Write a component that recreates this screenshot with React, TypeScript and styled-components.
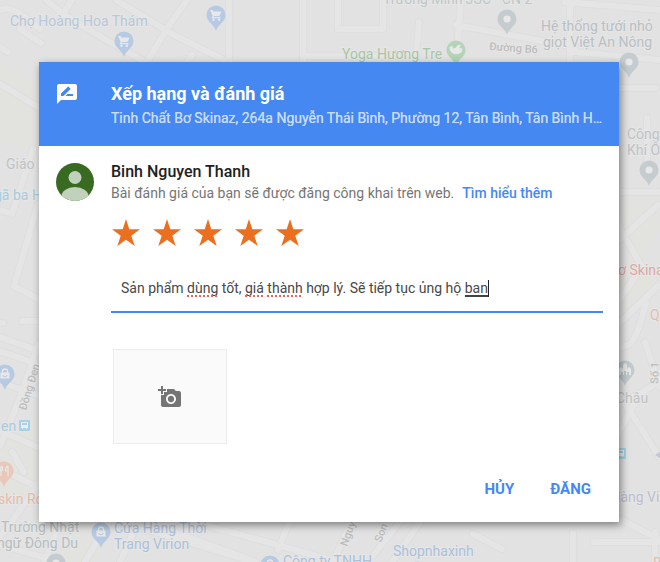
import React, { useState } from "react";
import styled, { createGlobalStyle, css } from "styled-components";

const GlobalStyle = createGlobalStyle`
  * { box-sizing: border-box; }
  html, body { margin: 0; background: #e2e2e2; overflow: hidden; }
  body, button, input, textarea { font-family: Roboto, "Liberation Sans", sans-serif; }
`;

const Page = styled.div`
  position: relative;
  min-height: 100vh;
  padding: 62px 41px 40px 39px;
`;

const MapCanvas = styled.svg`
  position: absolute;
  inset: 0;
  width: 100%;
  height: 100%;
  font-family: Roboto, "Liberation Sans", sans-serif;
  font-size: 14px;
`;

const Dialog = styled.section`
  position: relative;
  background: #fff;
  box-shadow: 2px 3px 8px rgba(0, 0, 0, 0.45);
`;

const gridRow = css`
  display: grid;
  grid-template-columns: 40px minmax(0, 1fr);
  column-gap: 16px;
  padding-left: 16px;
  padding-right: 16px;
`;

const Header = styled.header`
  ${gridRow}
  height: 84px;
  padding-top: 20px;
  background: #4688f1;
  color: #fff;
`;

const Title = styled.h1`
  margin: 0;
  font-size: 18px;
  line-height: 24px;
  font-weight: 700;
`;

const Place = styled.p`
  margin: 0;
  overflow: hidden;
  color: #c7dbfb;
  font-size: 14px;
  line-height: 24px;
  font-weight: 400;
  text-shadow: 0 0 currentColor;
  white-space: nowrap;
  text-overflow: ellipsis;
`;

const Body = styled.form`
  ${gridRow}
  padding-top: 16px;
`;

const Content = styled.div`
  min-width: 0;
`;

const UserName = styled.h2`
  margin: 0;
  color: #212121;
  font-size: 16px;
  line-height: 20px;
  font-weight: 500;
`;

const Notice = styled.p`
  margin: 0;
  color: #757575;
  font-size: 14px;
  line-height: 22px;
`;

const Link = styled.a`
  margin-left: 8px;
  color: #4688f1;
  font-weight: 500;
  text-decoration: none;
`;

const Stars = styled.div`
  display: flex;
  gap: 11px;
  height: 48px;
  padding-top: 14px;
`;

const StarButton = styled.button<{ $on: boolean }>`
  width: 30px;
  height: 30px;
  padding: 0;
  border: 0;
  background: none;
  color: ${(p) => (p.$on ? "#ec6f20" : "#dadce0")};
  svg { display: block; }
`;

const Field = styled.div`
  position: relative;
  height: 61px;
  border-bottom: 2px solid #4688f1;
`;

const fieldText = css`
  padding: 26px 10px 0;
  font-size: 14px;
  line-height: 20px;
`;

const ReviewInput = styled.textarea`
  ${fieldText}
  display: block;
  width: 100%;
  height: 59px;
  border: 0;
  outline: 0;
  resize: none;
  background: none;
  color: #484848;
  caret-color: transparent;
`;

const Marks = styled.div`
  ${fieldText}
  position: absolute;
  inset: 0;
  color: transparent;
  white-space: pre-wrap;
  pointer-events: none;
`;

const Misspelt = styled.span`
  text-decoration: underline dotted #ef5f5a 2px;
  text-decoration-skip-ink: none;
  text-underline-offset: 2px;
`;

const Composing = styled.span`
  padding-bottom: 1px;
  border-right: 1px solid #212121;
  text-decoration: underline #424242 2px;
  text-underline-offset: 2px;
`;

const PhotoButton = styled.button`
  display: flex;
  align-items: center;
  justify-content: center;
  width: 114px;
  height: 95px;
  margin: 36px 2px 0;
  padding: 0;
  border: 1px solid #ececec;
  background: #fafafa;
  color: #757575;
`;

const Actions = styled.footer`
  grid-column: 1 / -1;
  display: flex;
  justify-content: flex-end;
  gap: 20px;
  padding: 27px 4px 15px;
`;

const TextButton = styled.button`
  height: 36px;
  padding: 0 8px;
  border: 0;
  background: none;
  color: #4688f1;
  font-size: 15px;
  font-weight: 700;
`;

type PinKind = "cart" | "dot" | "bag" | "food" | "city" | "spa";

const pins: { x: number; y: number; kind: PinKind; color: string }[] = [
  { x: 216, y: 15, kind: "cart", color: "#b7cae3" },
  { x: 124, y: 41, kind: "cart", color: "#b7cae3" },
  { x: 507, y: 19, kind: "dot", color: "#c4ccd0" },
  { x: 456, y: 50, kind: "spa", color: "#b4d4b6" },
  { x: 629, y: 62, kind: "dot", color: "#c4ccd0" },
  { x: 649, y: 170, kind: "dot", color: "#c4ccd0" },
  { x: 5, y: 374, kind: "bag", color: "#b7cae3" },
  { x: 4, y: 471, kind: "food", color: "#e9c8b9" },
  { x: 101, y: 532, kind: "bag", color: "#b7cae3" },
  { x: 56, y: 563, kind: "dot", color: "#c4ccd0" },
  { x: 270, y: 565, kind: "bag", color: "#b7cae3" },
  { x: 625, y: 370, kind: "city", color: "#c1cace" },
  { x: 417, y: 571, kind: "bag", color: "#b7cae3" },
];

function PinGlyph({ kind }: { kind: PinKind }) {
  const ink = "#e8e8e8";
  switch (kind) {
    case "cart":
      return (
        <g fill={ink}>
          <path d="M-6-5h2.600l.7 1.500h8.200L3.500 1h-5.500l-.5 1h7v1.300h-9l1.200-2.500z" />
          <circle cx="-2.500" cy="4.800" r="1.200" />
          <circle cx="3" cy="4.800" r="1.200" />
        </g>
      );
    case "bag":
      return (
        <g>
          <path d="M-4.500-1.500h9v6h-9z" fill={ink} />
          <path d="M-2.500-1v-1.500a2.500 2.500 0 0 1 5 0V-1" fill="none" stroke={ink} strokeWidth="1.300" />
          <path d="M-2 1a2 1.800 0 0 0 4 0" fill="none" stroke="#b7cae3" />
        </g>
      );
    case "food":
      return (
        <path
          d="M-4.500-5v3.500q0 1.500 1.500 1.500v5M-3-5v5M-1.500-5v3.500q0 1.500-1.500 1.500M4-5v10M4-5Q1.500-4 1.500 0H4"
          fill="none"
          stroke={ink}
          strokeWidth="1.200"
        />
      );
    case "city":
      return <path d="M-6 5v-6l2-2 2 2v-4l2-2 2 2v4l2-2 2 2v6h-2V2H2v3h-1V1h-2v4h-1V2h-2v3z" fill={ink} />;
    case "spa":
      return (
        <path
          d="M-6.500-2.500a2 2 0 0 1 3-1q1 1 0 2Q0-1.500 1.500-4.500q1.500-1 4-.5-2 1-2 3l3 .5q0 4-3 5-5 2-8-1-2.500-2-2-5z"
          fill={ink}
        />
      );
    default:
      return <circle r="3.600" fill={ink} />;
  }
}

const roads = [
  "M-5 13q12-10 28 3l17 13M-4 45l12 7M20 29l21 14M72 0L63 14l45 27 60 34M46 0l28 23M116 0l58 35 56 28M187 0l-19 27-23 38M229 0v66M192 55l-8 12M303 0v65M305 56h92",
  "M338 0v29h45V0M419 22l-4 43M456 25l119 22M461 0l-4 50M570 0v65M565 2l95 8M575 52l85 8",
  "M0 84l38 23M33 149L12 214-5 209M38 204l-24 82 28 15M0 323h3M22 321h20M0 337l42 15",
  "M0 351l40 14M0 382l40 14M39 343L19 400 0 446M0 431l40 17M0 469l42 20M12 452l12 20M42 480L0 537M60 522l-16 42M0 545l60 17",
  "M85 562l28-48 78 24 65 24M120 562l20-44M132 525l122 37M188 520l150 42M290 520l-12 30M333 562l20-44M368 562l38-48M425 515l-35 50M473 534l29 15M573 533v32M594 542h66M622 520l38 20",
  "M619 88h36M647 118v50M619 192h41M658 205l-41 37M618 225l24 42-24 35M660 284l-42 40M646 303q-10 40-18 42l-11 3M618 404q24-10 42-24M635 402l-18 34M626 405l34 53M645 342l15 45M655 532v30",
];

const blocks = [
  "M0 62l39 22v72L0 140z",
  "M619 196l41-8v40l-17 24-24-30z",
  "M0 451l39-37v82L0 506z",
  "M619 270l20-20 21 28-41 36z",
  "M68 531l27-9 14 18-16 22H58z",
];

const labels: { x: number; y: number; text: string; tone: string; turn?: number; small?: boolean }[] = [
  { x: 10, y: 26, text: "Chợ Hoàng Hoa Thám", tone: "#b7c6da" },
  { x: 383, y: 4, text: "Trường Minh JSC - CN 2", tone: "#bfc6c9" },
  { x: 541, y: 31, text: "Hệ thống tưới nhỏ", tone: "#b9c0c3" },
  { x: 543, y: 47, text: "giọt Việt An Nông", tone: "#b9c0c3" },
  { x: 342, y: 59, text: "Yoga Hương Tre", tone: "#a7c6a7" },
  { x: 489, y: 50, text: "Đường B6", tone: "#bdbdbd", turn: 4, small: true },
  { x: 6, y: 169, text: "Giáo X", tone: "#bfc3c5" },
  { x: -6, y: 200, text: "gã ba H", tone: "#a9cbdc" },
  { x: 627, y: 139, text: "Công", tone: "#bfc3c5" },
  { x: 627, y: 155, text: "Khí Ô", tone: "#bfc3c5" },
  { x: 618, y: 275, text: "ơ Skinaz", tone: "#dba8a6" },
  { x: 650, y: 320, text: "Qu", tone: "#e2bdaa" },
  { x: 616, y: 403, text: "Châu", tone: "#bfc3c5" },
  { x: 617, y: 502, text: "làng Việt", tone: "#bdbdd0" },
  { x: 653, y: 568, text: "Bá", tone: "#e2bdaa" },
  { x: 658, y: 384, text: "Số 1", tone: "#bdbdbd", turn: -88, small: true },
  { x: 26, y: 411, text: "Đồng Đen", tone: "#bdbdbd", turn: -73, small: true },
  { x: 1, y: 431, text: "en", tone: "#a9cbdc" },
  { x: -2, y: 504, text: "skin Rob", tone: "#e2bdaa" },
  { x: 1, y: 532, text: "Trường Nhật", tone: "#b5bdc0" },
  { x: -3, y: 548, text: "ngữ Đông Du", tone: "#b5bdc0" },
  { x: 114, y: 533, text: "Cửa Hàng Thời", tone: "#adc0da" },
  { x: 114, y: 549, text: "Trang Virion", tone: "#adc0da" },
  { x: 283, y: 566, text: "Công ty TNHH", tone: "#adc0da" },
  { x: 393, y: 556, text: "Shopnhaxinh", tone: "#adc0da" },
  { x: 347, y: 547, text: "Nguy", tone: "#bdbdbd", turn: -70, small: true },
  { x: 381, y: 543, text: "Son", tone: "#bdbdbd", turn: -68, small: true },
];

function MapBackdrop() {
  return (
    <MapCanvas viewBox="0 0 660 562" preserveAspectRatio="xMidYMid slice" aria-hidden="true">
      <rect width="660" height="562" fill="#e2e2e2" />
      {blocks.map((d) => <path key={d} d={d} fill="#e2e2df" />)}
      <g fill="none" strokeLinejoin="round" strokeLinecap="round">
        {roads.map((d) => <path key={d} d={d} stroke="#dedede" strokeWidth="8" />)}
        {roads.map((d) => <path key={d} d={d} stroke="#e5e5e5" strokeWidth="6" />)}
      </g>
      {pins.map((p) => (
        <g key={`${p.x}-${p.y}`} transform={`translate(${p.x} ${p.y})`}>
          <path d="M0 16C-2 9-9.500 7-9.500 0a9.500 9.500 0 1 1 19 0C9.500 7 2 9 0 16z" fill={p.color} />
          <PinGlyph kind={p.kind} />
        </g>
      ))}
      {[[19, 420], [615, 448]].map(([x, y]) => (
        <g key={x} transform={`translate(${x} ${y})`}>
          <rect width="11" height="11" rx="1" fill="#a5d3e5" />
          <path d="M2 2h7v6H2zM3 3v2h5V3zM3 8h1v1H3zM7 8h1v1H7z" fill="#e6eef0" fillRule="evenodd" />
        </g>
      ))}
      <path d="M655 455l6-4v8z" fill="#c6c6d4" />
      {labels.map((l) => (
        <text
          key={l.text}
          fill={l.tone}
          stroke="#e6e6e6"
          strokeWidth="2"
          paintOrder="stroke"
          fontSize={l.small ? 11 : 14}
          fontWeight={l.small ? 500 : 400}
          transform={`translate(${l.x} ${l.y}) rotate(${l.turn ?? 0})`}
        >
          {l.text}
        </text>
      ))}
    </MapCanvas>
  );
}

const RateIcon = () => (
  <svg width="24" height="24" viewBox="0 0 24 24" fill="currentColor" aria-hidden="true">
    <path d="M20 2H4c-1.100 0-1.990.9-1.990 2L2 22l4-4h14c1.100 0 2-.9 2-2V4c0-1.100-.9-2-2-2zM6 14v-2.470l6.880-6.880c.2-.2.510-.2.710 0l1.770 1.770c.2.200.2.510 0 .71L8.470 14H6zm12 0h-7.500l2-2H18v2z" />
  </svg>
);

const Avatar = () => (
  <svg width="40" height="40" viewBox="0 0 40 40" role="img" aria-label="Binh Nguyen Thanh">
    <defs>
      <clipPath id="avatar-clip"><circle cx="20" cy="20" r="19" /></clipPath>
    </defs>
    <circle cx="20" cy="20" r="19" fill="#386a21" />
    <g fill="#c2d1bb" clipPath="url(#avatar-clip)">
      <circle cx="20" cy="15.500" r="6.500" />
      <ellipse cx="20" cy="34" rx="13.500" ry="9" />
    </g>
  </svg>
);

const StarIcon = () => (
  <svg width="30" height="30" viewBox="0 0 30 30" fill="currentColor" aria-hidden="true">
    <path d="M15 1l3.300 10.200H29l-8.700 6.600L23.700 28 15 21.800 6.300 28l3.400-10.200L1 11.200h10.700z" />
  </svg>
);

const CameraIcon = () => (
  <svg width="24" height="24" viewBox="0 0 24 24" fill="currentColor" aria-hidden="true">
    <path d="M3 4V1h2v3h3v2H5v3H3V6H0V4h3zm3 6V7h3V4h7l1.830 2H21c1.100 0 2 .9 2 2v12c0 1.100-.9 2-2 2H5c-1.100 0-2-.9-2-2V10h3zm7 9c2.760 0 5-2.240 5-5s-2.240-5-5-5-5 2.240-5 5 2.240 5 5 5zm-3.200-5c0 1.770 1.430 3.200 3.200 3.200s3.200-1.430 3.200-3.200-1.430-3.200-3.200-3.200-3.200 1.430-3.200 3.200z" />
  </svg>
);

const flagged = ["dùng", "giá", "thành"];

export default function App() {
  const [rating, setRating] = useState(5);
  const [review, setReview] = useState("Sản phẩm dùng tốt, giá thành hợp lý. Sẽ tiếp tục ủng hộ ban");
  const words = review.split(/(\s+)/);

  return (
    <>
      <GlobalStyle />
      <Page>
        <MapBackdrop />
        <Dialog role="dialog" aria-labelledby="dialog-title">
          <Header>
            <RateIcon />
            <div>
              <Title id="dialog-title">Xếp hạng và đánh giá</Title>
              <Place>Tinh Chất Bơ Skinaz, 264a Nguyễn Thái Bình, Phường 12, Tân Bình, Tân Bình Hồ Chí Minh</Place>
            </div>
          </Header>
          <Body onSubmit={(e) => e.preventDefault()}>
            <Avatar />
            <Content>
              <UserName>Binh Nguyen Thanh</UserName>
              <Notice>
                Bài đánh giá của bạn sẽ được đăng công khai trên web.
                <Link href="#more">Tìm hiểu thêm</Link>
              </Notice>
              <Stars>
                {[1, 2, 3, 4, 5].map((n) => (
                  <StarButton key={n} type="button" $on={n <= rating} aria-label={`${n} sao`} onClick={() => setRating(n)}>
                    <StarIcon />
                  </StarButton>
                ))}
              </Stars>
              <Field>
                <ReviewInput
                  aria-label="Bài đánh giá"
                  spellCheck={false}
                  value={review}
                  onChange={(e) => setReview(e.target.value)}
                />
                <Marks aria-hidden="true">
                  {words.map((w, i) => {
                    if (i === words.length - 1) return <Composing key={i}>{w}</Composing>;
                    return flagged.includes(w) ? <Misspelt key={i}>{w}</Misspelt> : w;
                  })}
                </Marks>
              </Field>
              <PhotoButton type="button" aria-label="Thêm ảnh">
                <CameraIcon />
              </PhotoButton>
            </Content>
            <Actions>
              <TextButton type="button">HỦY</TextButton>
              <TextButton type="submit">ĐĂNG</TextButton>
            </Actions>
          </Body>
        </Dialog>
      </Page>
    </>
  );
}
